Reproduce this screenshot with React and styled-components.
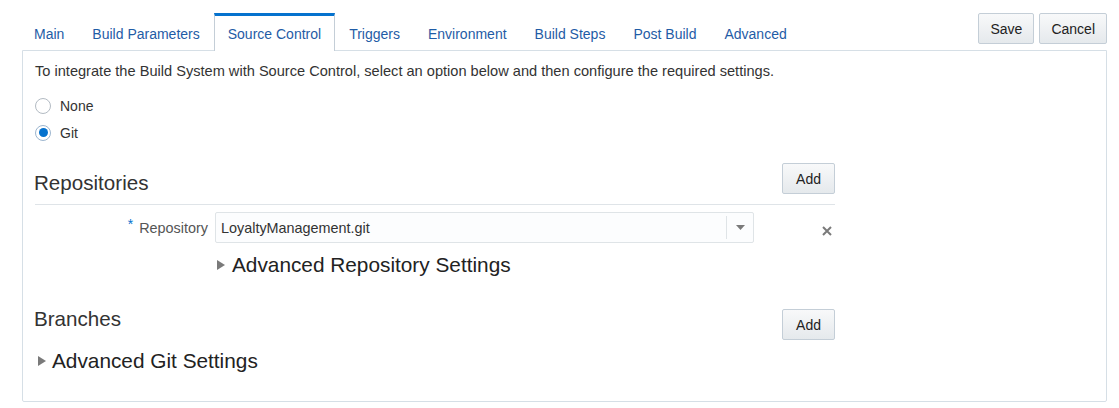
import React, { useState } from "react";
import styled, { createGlobalStyle } from "styled-components";

const GlobalStyle = createGlobalStyle`
  body {
    margin: 0;
    background: #fff;
    font-family: "Liberation Sans", Arial, sans-serif;
    color: #333;
  }
`;

const tabs = [
  "Main",
  "Build Parameters",
  "Source Control",
  "Triggers",
  "Environment",
  "Build Steps",
  "Post Build",
  "Advanced",
];

const Page = styled.div`
  padding: 0 12px 0 22px;
  width: 1085px;
`;

const TopBar = styled.div`
  display: flex;
  justify-content: space-between;
  align-items: flex-start;
`;

const TabList = styled.div`
  display: flex;
  margin: 12px 0 0 -2px;
  position: relative;
  top: 1px;
`;

const Tab = styled.div`
  height: 33px;
  padding: 1px 13px 1px;
  box-sizing: content-box;
  display: flex;
  align-items: center;
  font-size: 14px;
  color: #1f5ca6;
  background: ${(p) => (p.$active ? "#fff" : "transparent")};
  border: 1px solid ${(p) => (p.$active ? "#c4ced7" : "transparent")};
  border-top: 3px solid ${(p) => (p.$active ? "#0572ce" : "transparent")};
  border-bottom: none;
  cursor: pointer;
`;

const Actions = styled.div`
  display: flex;
  gap: 5px;
  margin-top: 13px;
`;

const Button = styled.button`
  height: 31px;
  padding: 0 11px;
  margin-top: ${(p) => p.$top || 0}px;
  font-family: "Liberation Sans", Arial, sans-serif;
  font-size: 14px;
  color: #222;
  background: linear-gradient(#f8f9fa, #e5e9ec);
  border: 1px solid #c4ced7;
  border-radius: 2px;
  flex-shrink: 0;
`;

const AddButton = styled(Button)`
  padding: 0 13px;
`;

const Panel = styled.div`
  border: 1px solid #d6dfe6;
  border-radius: 0 0 2px 2px;
  padding: 11px 12px 28px;
`;

const Intro = styled.div`
  font-size: 14.6px;
  line-height: 18px;
  color: #333;
`;

const RadioGroup = styled.div`
  margin-top: 12px;
`;

const RadioRow = styled.label`
  display: flex;
  align-items: center;
  height: 27px;
  font-size: 14px;
  color: #333;
  gap: 9px;
`;

const RadioDot = styled.span`
  width: 16px;
  height: 16px;
  box-sizing: border-box;
  border-radius: 50%;
  border: 1px solid ${(p) => (p.$checked ? "#9db6cf" : "#b3bbc3")};
  background: #fff;
  display: flex;
  align-items: center;
  justify-content: center;
  &::after {
    content: "";
    width: 9px;
    height: 9px;
    border-radius: 50%;
    background: ${(p) => (p.$checked ? "#0572ce" : "transparent")};
  }
`;

const Form = styled.div`
  width: 800px;
`;

const SectionHead = styled.div`
  display: flex;
  justify-content: space-between;
  align-items: flex-start;
  margin-top: ${(p) => p.$top}px;
  padding-bottom: ${(p) => (p.$ruled ? 9 : 0)}px;
  border-bottom: ${(p) => (p.$ruled ? "1px solid #dfe4e8" : "none")};
`;

const Title = styled.h2`
  margin: ${(p) => p.$top || 0}px 0 0 -1px;
  font-size: 20.6px;
  line-height: 24px;
  font-weight: normal;
  color: #333;
`;

const FieldRow = styled.div`
  display: flex;
  align-items: center;
  margin-top: 7px;
`;

const Label = styled.div`
  width: 180px;
  padding-right: 7px;
  text-align: right;
  font-size: 14.4px;
  color: #555;
  box-sizing: border-box;
`;

const Required = styled.span`
  color: #0572ce;
  font-size: 14px;
  position: relative;
  top: -4px;
  margin-right: 6px;
`;

const Select = styled.div`
  width: 539px;
  height: 31px;
  box-sizing: border-box;
  border: 1px solid #dfe4e7;
  border-radius: 2px;
  background: #fcfdfe;
  display: flex;
  align-items: center;
`;

const SelectValue = styled.div`
  flex: 1;
  padding-left: 5px;
  font-size: 14.4px;
  color: #333;
`;

const SelectToggle = styled.div`
  width: 26px;
  height: 23px;
  border-left: 1px solid #dfe4e7;
  display: flex;
  align-items: center;
  justify-content: center;
`;

const Remove = styled.div`
  margin-left: 68px;
  display: flex;
  align-items: center;
  padding-top: 7px;
`;

const Disclosure = styled.div`
  display: flex;
  align-items: center;
  gap: ${(p) => p.$gap}px;
  margin: ${(p) => p.$top}px 0 0 ${(p) => p.$left}px;
  font-size: 20.8px;
  line-height: 24px;
  color: #222;
`;

const Caret = () => (
  <svg width="8" height="10" viewBox="0 0 8 10">
    <path d="M0 0 L8 5 L0 10 Z" fill="#7a7a7a" />
  </svg>
);

const DownArrow = () => (
  <svg width="9" height="5" viewBox="0 0 9 5">
    <path d="M0 0 L9 0 L4.5 5 Z" fill="#7a7a7a" />
  </svg>
);

const Cross = () => (
  <svg width="10" height="10" viewBox="0 0 10 10">
    <path d="M1 1 L9 9 M9 1 L1 9" stroke="#7a7a7a" strokeWidth="2" />
  </svg>
);

export default function App() {
  const [active, setActive] = useState("Source Control");
  const [scm, setScm] = useState("git");

  return (
    <Page>
      <GlobalStyle />
      <TopBar>
        <TabList>
          {tabs.map((t) => (
            <Tab key={t} $active={t === active} onClick={() => setActive(t)}>
              {t}
            </Tab>
          ))}
        </TabList>
        <Actions>
          <Button>Save</Button>
          <Button>Cancel</Button>
        </Actions>
      </TopBar>
      <Panel>
        <Intro>
          To integrate the Build System with Source Control, select an option
          below and then configure the required settings.
        </Intro>
        <RadioGroup>
          <RadioRow onClick={() => setScm("none")}>
            <RadioDot $checked={scm === "none"} />
            None
          </RadioRow>
          <RadioRow onClick={() => setScm("git")}>
            <RadioDot $checked={scm === "git"} />
            Git
          </RadioRow>
        </RadioGroup>
        <Form>
          <SectionHead $top={17} $ruled>
            <Title $top={8}>Repositories</Title>
            <AddButton>Add</AddButton>
          </SectionHead>
          <FieldRow>
            <Label>
              <Required>*</Required>Repository
            </Label>
            <Select>
              <SelectValue>LoyaltyManagement.git</SelectValue>
              <SelectToggle>
                <DownArrow />
              </SelectToggle>
            </Select>
            <Remove>
              <Cross />
            </Remove>
          </FieldRow>
          <Disclosure $top={10} $left={182} $gap={7}>
            <Caret />
            Advanced Repository Settings
          </Disclosure>
          <SectionHead $top={30}>
            <Title>Branches</Title>
            <AddButton $top={2}>Add</AddButton>
          </SectionHead>
          <Disclosure $top={9} $left={3} $gap={6}>
            <Caret />
            Advanced Git Settings
          </Disclosure>
        </Form>
      </Panel>
    </Page>
  );
}
